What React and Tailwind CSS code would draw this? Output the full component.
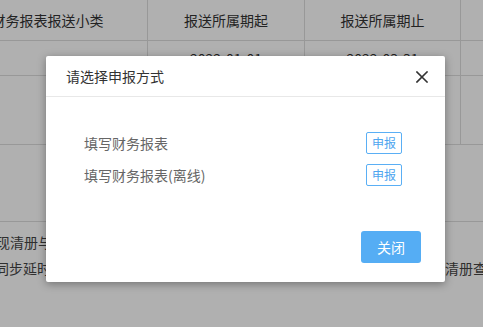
export default function App() {
  const font = { fontFamily: '"Noto Sans CJK SC", "Noto Sans", sans-serif' };
  return (
    <div className="relative w-[483px] h-[327px] overflow-hidden bg-white text-[14px] text-[#333]" style={font}>
      {/* underlying page */}
      <div className="flex flex-col">
        <div className="flex h-[41px] border-b border-[#dcdcdc] ml-[-52px]">
          <div className="w-[200px] shrink-0 flex items-center justify-center border-r border-[#dcdcdc]">财务报表报送小类</div>
          <div className="w-[157px] shrink-0 flex items-center justify-center border-r border-[#dcdcdc]">报送所属期起</div>
          <div className="w-[156px] shrink-0 flex items-center justify-center border-r border-[#dcdcdc]">报送所属期止</div>
          <div className="w-[60px] shrink-0"></div>
        </div>
        <div className="flex h-[35px] border-b border-[#dcdcdc] ml-[-52px]">
          <div className="w-[200px] shrink-0 border-r border-[#dcdcdc]"></div>
          <div className="w-[157px] shrink-0 flex items-center justify-center border-r border-[#dcdcdc]">2022-01-01</div>
          <div className="w-[156px] shrink-0 flex items-center justify-center border-r border-[#dcdcdc]">2022-03-31</div>
          <div className="w-[60px] shrink-0"></div>
        </div>
        <div className="flex h-[69px] border-b border-[#dcdcdc] ml-[-52px]">
          <div className="w-[200px] shrink-0 border-r border-[#dcdcdc]"></div>
          <div className="w-[157px] shrink-0 border-r border-[#dcdcdc]"></div>
          <div className="w-[156px] shrink-0 border-r border-[#dcdcdc]"></div>
          <div className="w-[60px] shrink-0"></div>
        </div>
        <div className="h-[77px] border-b border-[#dcdcdc]"></div>
        <div className="flex flex-col gap-[7px] pt-[11px] leading-[19px] text-[#444] whitespace-nowrap">
          <div className="ml-[-4px]">现清册与实际申报情况</div>
          <div className="flex ml-[-5px]">
            <span className="w-[450px] shrink-0">同步延时原因</span>
            <span>清册查询</span>
          </div>
        </div>
      </div>

      {/* overlay */}
      <div className="absolute inset-0 bg-black/[0.31]"></div>

      {/* modal */}
      <div className="absolute left-[46px] top-[56px] w-[399px] h-[226px] bg-white rounded-[2px] shadow-[0_2px_8px_rgba(0,0,0,0.35)] flex flex-col">
        <div className="h-[41px] border-b border-[#e8e8e8] flex items-center justify-between pl-[20px] pr-[17px]">
          <span className="text-[14px] text-[#333]">请选择申报方式</span>
          <svg width="12" height="12" viewBox="0 0 12 12" className="mt-[1px]">
            <path d="M1 1 L11 11 M11 1 L1 11" stroke="#333" strokeWidth="1.6" strokeLinecap="square" />
          </svg>
        </div>
        <div className="flex flex-col gap-[10px] pl-[38px] pr-[43px] pt-[35px]">
          <div className="flex items-center justify-between h-[22px]">
            <span className="text-[14px] text-[#666]">填写财务报表</span>
            <button className="w-[36px] h-[22px] border border-[#5aaff5] rounded-[2px] text-[12px] text-[#4ea5ef] flex items-center justify-center bg-white">申报</button>
          </div>
          <div className="flex items-center justify-between h-[22px]">
            <span className="text-[14px] text-[#666]">填写财务报表(离线)</span>
            <button className="w-[36px] h-[22px] border border-[#5aaff5] rounded-[2px] text-[12px] text-[#4ea5ef] flex items-center justify-center bg-white">申报</button>
          </div>
        </div>
        <div className="flex justify-end pr-[24px] mt-[45px]">
          <button className="w-[60px] h-[32px] bg-[#55adf4] rounded-[3px] text-white text-[14px] flex items-center justify-center">关闭</button>
        </div>
      </div>
    </div>
  );
}
